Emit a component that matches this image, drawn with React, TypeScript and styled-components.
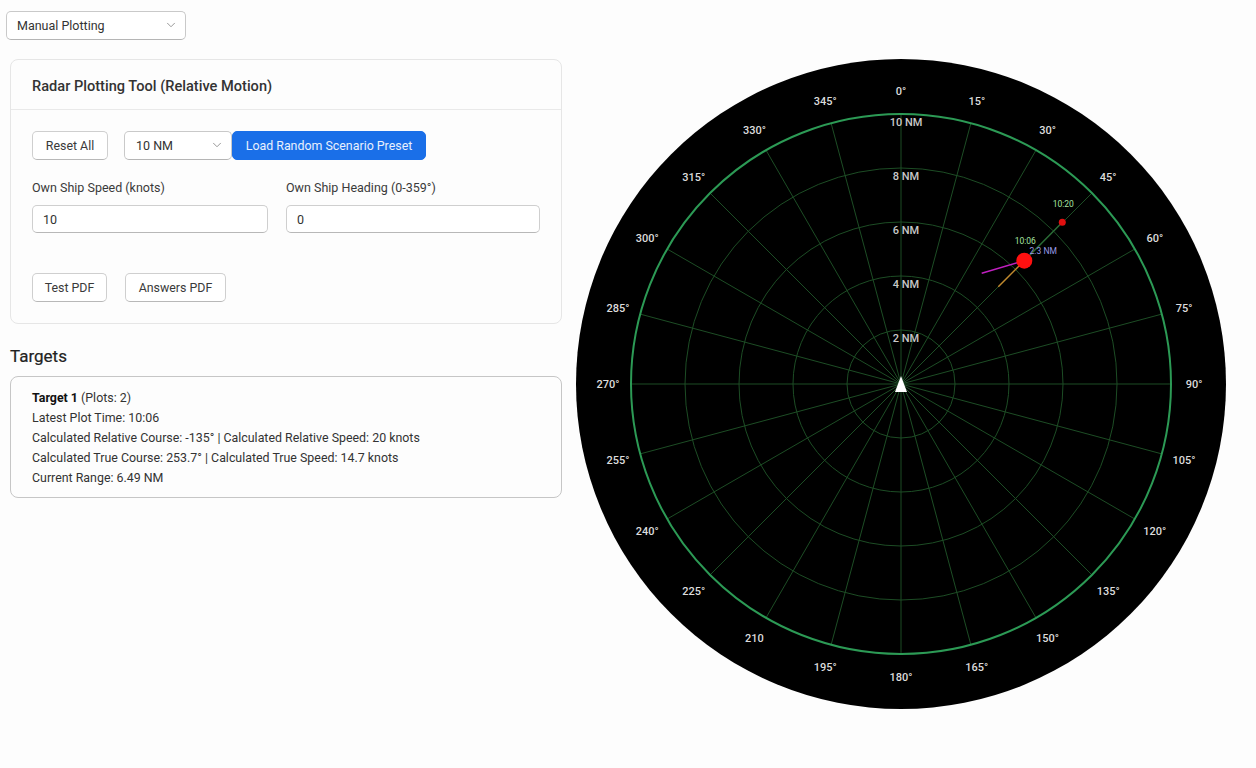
import React from "react";
import styled, {createGlobalStyle} from "styled-components";
import {ChevronDown} from "lucide-react";

const GlobalStyle = createGlobalStyle`
  html, body {
    margin: 0;
    padding: 0;
    background: #fdfdfd;
  }
  body {
    font-family: Roboto, "Noto Sans", sans-serif;
    color: #2b2b2b;
  }
`;

const Page = styled.div`
  display: flex;
  width: 1256px;
  height: 768px;
  overflow: hidden;
`;
const LeftColumn = styled.div`
  display: flex;
  flex-direction: column;
  width: 552px;
  margin-left: 10px;
  padding-top: 11px;
`;
const RightColumn = styled.div`
  padding: 59px 0 0 14px;
`;
const SelectWrap = styled.div<{ $width: number }>`
  position: relative;
  width: ${props => props.$width}px;
  height: 29px;
  flex-shrink: 0;
`;
const Select = styled.select<{ $pad: number }>`
  appearance: none;
  width: 100%;
  height: 100%;
  padding: 0 0 0 ${props => props.$pad}px;
  box-sizing: border-box;
  background: #ffffff;
  border: 1px solid #c9c9c9;
  border-bottom-color: #b5b5b5;
  border-radius: 5px;
  font-family: inherit;
  font-size: 12.5px;
  color: #333333;
`;
const Chevron = styled(ChevronDown)`
  position: absolute;
  top: 7px;
  right: 8px;
  width: 14px;
  height: 14px;
  color: #8a8a8a;
  pointer-events: none;
`;
const ModeSelect = styled.div`
  margin: 0 0 19px -4px;
`;
const Card = styled.section`
  display: flex;
  flex-direction: column;
  height: 265px;
  box-sizing: border-box;
  background: #fdfdfd;
  border: 1px solid #e6e6e6;
  border-radius: 8px;
`;
const CardHeader = styled.h2`
  margin: 0;
  height: 50px;
  padding-left: 21px;
  box-sizing: border-box;
  border-bottom: 1px solid #e9e9e9;
  font-size: 14.6px;
  font-weight: 500;
  line-height: 52px;
  color: #333333;
`;
const CardBody = styled.div`
  display: flex;
  flex-direction: column;
  padding: 21px 21px 0 21px;
`;
const ButtonRow = styled.div`
  display: flex;
  align-items: center;
`;
const Button = styled.button<{ $width: number; $gap?: number }>`
  width: ${props => props.$width}px;
  height: 29px;
  margin-right: ${props => props.$gap ?? 0}px;
  padding: 0;
  background: #ffffff;
  border: 1px solid #cfcfcf;
  border-bottom-color: #b8b8b8;
  border-radius: 5px;
  font-family: inherit;
  font-size: 12.4px;
  color: #3a3a3a;
`;
const PrimaryButton = styled(Button)`
  background: #1a6fe8;
  border-color: #1a6fe8;
  color: #e8f0fd;
`;
const Fields = styled.div`
  display: grid;
  grid-template-columns: 236px 254px;
  column-gap: 18px;
  margin: 19px 0 40px;
`;
const Field = styled.label`
  display: flex;
  flex-direction: column;
  gap: 8px;
  font-size: 12.5px;
  line-height: 18px;
  color: #3a3a3a;
`;
const Input = styled.input`
  height: 28px;
  padding: 0 0 0 10px;
  box-sizing: border-box;
  background: #ffffff;
  border: 1px solid #cfcfcf;
  border-bottom-color: #b8b8b8;
  border-radius: 5px;
  font-family: inherit;
  font-size: 12.5px;
  color: #333333;
`;
const SectionTitle = styled.h3`
  margin: 21px 0 8px;
  font-size: 17px;
  font-weight: 400;
  line-height: 23px;
  color: #222222;
  -webkit-text-stroke: 0.2px #222222;
`;
const TargetCard = styled.div`
  height: 122px;
  padding: 11px 21px 0;
  box-sizing: border-box;
  background: #fdfdfd;
  border: 1px solid #c6c6c6;
  border-radius: 8px;
  font-size: 12.4px;
  line-height: 20px;
  color: #333333;
`;
const TargetName = styled.strong`
  font-weight: 700;
  color: #111111;
`;

const SIZE = 650;
const C = SIZE / 2;
const RING_STEP = 54;
const OUTER = 270;

// x, y for a bearing measured clockwise from north
const polar = (deg: number, r: number) => {
  const a = (deg * Math.PI) / 180;
  return {x: C + r * Math.sin(a), y: C - r * Math.cos(a)};
};
const bearings = Array.from({length: 24}, (_, i) => i * 15);
const ranges = [2, 4, 6, 8, 10];

// radar coords are page coords minus the circle's top left corner
const toRadar = (x: number, y: number) => ({x: x - 576, y: y - 59});
const far = toRadar(1062.3, 222.3);
const near = toRadar(1024.3, 260.7);
const rel = toRadar(998.3, 286.7);
const trueLine = toRadar(981.7, 273.3);

const Radar: React.FC = () => (
  <svg width={SIZE} height={SIZE} viewBox={`0 0 ${SIZE} ${SIZE}`} style={{display: "block"}}>
    <circle cx={C} cy={C} r={C} fill="#000000"/>
    {bearings.map(deg => {
      const end = polar(deg, OUTER);
      return <line key={deg} x1={C} y1={C} x2={end.x} y2={end.y} stroke="#1d4d25" strokeWidth={1}/>;
    })}
    {ranges.slice(0, 4).map((nm, i) => (
      <circle key={nm} cx={C} cy={C} r={RING_STEP * (i + 1)} fill="none" stroke="#1d4d25" strokeWidth={1}/>
    ))}
    <circle cx={C} cy={C} r={OUTER} fill="none" stroke="#2c9a55" strokeWidth={2}/>
    {ranges.map((nm, i) => (
      <text
        key={nm}
        x={C + 5}
        y={C - RING_STEP * (i + 1) + 12}
        textAnchor="middle"
        fontSize={11}
        fontWeight={500}
        fill="#c8c8c8"
      >
        {nm} NM
      </text>
    ))}
    {bearings.map(deg => {
      const p = polar(deg, 293);
      return (
        <text key={deg} x={p.x} y={p.y + 4} textAnchor="middle" fontSize={11} fontWeight={500} fill="#dcdcdc">
          {deg === 210 ? "210" : `${deg}°`}
        </text>
      );
    })}
    <line x1={far.x} y1={far.y} x2={near.x} y2={near.y} stroke="#2a6a35" strokeWidth={1.5}/>
    <line x1={near.x} y1={near.y} x2={rel.x} y2={rel.y} stroke="#c08a2e" strokeWidth={1.5}/>
    <line x1={near.x} y1={near.y} x2={trueLine.x} y2={trueLine.y} stroke="#c020c0" strokeWidth={1.5}/>
    <circle cx={far.x} cy={far.y} r={3.5} fill="#e01010"/>
    <circle cx={near.x} cy={near.y} r={8} fill="#ff1010"/>
    <text x={far.x + 1} y={far.y - 15} textAnchor="middle" fontSize={8.5} fill="#a6e3a0">10:20</text>
    <text x={near.x + 1} y={near.y - 17} textAnchor="middle" fontSize={8.5} fill="#a6e3a0">10:06</text>
    <text x={near.x + 19} y={near.y - 7} textAnchor="middle" fontSize={8.5} fill="#9a9ae6">2.3 NM</text>
    <polygon points={`${C},${C - 8} ${C + 6},${C + 8} ${C - 6},${C + 8}`} fill="#ffffff"/>
  </svg>
);

const App: React.FC = () => (
  <Page>
    <GlobalStyle/>
    <LeftColumn>
      <ModeSelect>
        <SelectWrap $width={180}>
          <Select $pad={10} defaultValue="manual">
            <option value="manual">Manual Plotting</option>
          </Select>
          <Chevron strokeWidth={1.5}/>
        </SelectWrap>
      </ModeSelect>
      <Card>
        <CardHeader>Radar Plotting Tool (Relative Motion)</CardHeader>
        <CardBody>
          <ButtonRow>
            <Button $width={76} $gap={16}>Reset All</Button>
            <SelectWrap $width={108}>
              <Select $pad={11} defaultValue="10">
                <option value="10">10 NM</option>
              </Select>
              <Chevron strokeWidth={1.5}/>
            </SelectWrap>
            <PrimaryButton $width={194}>Load Random Scenario Preset</PrimaryButton>
          </ButtonRow>
          <Fields>
            <Field>
              Own Ship Speed (knots)
              <Input defaultValue="10"/>
            </Field>
            <Field>
              Own Ship Heading (0-359°)
              <Input defaultValue="0"/>
            </Field>
          </Fields>
          <ButtonRow>
            <Button $width={75} $gap={18}>Test PDF</Button>
            <Button $width={101}>Answers PDF</Button>
          </ButtonRow>
        </CardBody>
      </Card>
      <SectionTitle>Targets</SectionTitle>
      <TargetCard>
        <div><TargetName>Target 1</TargetName> (Plots: 2)</div>
        <div>Latest Plot Time: 10:06</div>
        <div>Calculated Relative Course: -135° | Calculated Relative Speed: 20 knots</div>
        <div>Calculated True Course: 253.7° | Calculated True Speed: 14.7 knots</div>
        <div>Current Range: 6.49 NM</div>
      </TargetCard>
    </LeftColumn>
    <RightColumn>
      <Radar/>
    </RightColumn>
  </Page>
);

export default App;
